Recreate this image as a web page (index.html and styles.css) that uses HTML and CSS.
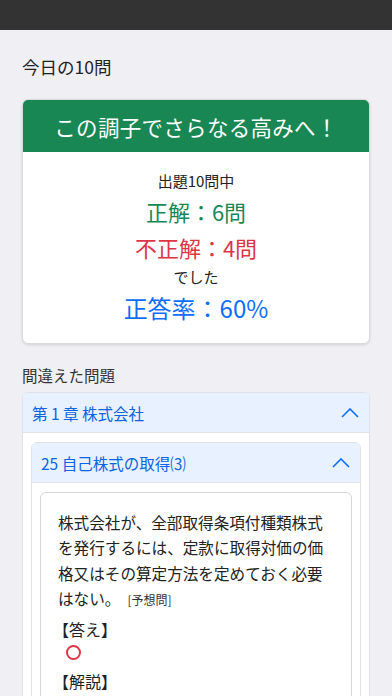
FILE: index.html
```html
<!DOCTYPE html>
<html lang="ja">
<head>
<meta charset="utf-8">
<meta name="viewport" content="width=device-width, initial-scale=1">
<title>今日の10問</title>
<link rel="stylesheet" href="styles.css">
</head>
<body>
<div class="topbar"></div>
<main class="main">
  <h1 class="page-title">今日の10問</h1>
  <section class="result-card">
    <div class="result-head">この調子でさらなる高みへ！</div>
    <div class="result-body">
      <div class="r-small r-first">出題10問中</div>
      <div class="r-correct">正解：6問</div>
      <div class="r-wrong">不正解：4問</div>
      <div class="r-small r-deshita">でした</div>
      <div class="r-rate">正答率：60%</div>
    </div>
  </section>

  <h2 class="section-title">間違えた問題</h2>
  <div class="acc">
    <div class="acc-head">
      <span>第 1 章 株式会社</span>
      <svg class="chev" width="18" height="10" viewBox="0 0 18 10"><polyline points="1,9 9,1 17,9" fill="none" stroke="#0d6efd" stroke-width="1.6"/></svg>
    </div>
    <div class="acc-body">
      <div class="acc">
        <div class="acc-head">
          <span>25 自己株式の取得⑶</span>
          <svg class="chev" width="18" height="10" viewBox="0 0 18 10"><polyline points="1,9 9,1 17,9" fill="none" stroke="#0d6efd" stroke-width="1.6"/></svg>
        </div>
        <div class="acc-body">
          <div class="q-card">
            <p class="q-text"><span class="q-body">株式会社が、全部取得条項付種類株式を発行するには、定款に取得対価の価格又はその算定方法を定めておく必要はない。</span><span class="q-tag">[予想問]</span></p>
            <div class="q-label">【答え】</div>
            <div class="q-mark"><span class="circle"></span></div>
            <div class="q-label">【解説】</div>
          </div>
        </div>
      </div>
    </div>
  </div>
</main>
</body>
</html>
```

FILE: styles.css
```css
* { box-sizing: border-box; }
html, body {
  margin: 0;
  padding: 0;
  background: #efeff4;
  font-family: "Noto Sans CJK JP", "Noto Sans", sans-serif;
  color: #222;
}
body { overflow: hidden; height: 696px; }
.topbar {
  height: 30px;
  background: #333333;
}
.main {
  padding: 25px 22px 0 22px;
}
.page-title {
  margin: 0;
  font-size: 17.5px;
  font-weight: 400;
  line-height: 24px;
  color: #222;
}
.result-card {
  margin-top: 20px;
  background: #fff;
  border: 1px solid #d9d9de;
  border-radius: 6px;
  overflow: hidden;
  box-shadow: 0 1px 3px rgba(0,0,0,0.12);
}
.result-head {
  background: #198754;
  color: #fff;
  height: 52px;
  display: flex;
  align-items: center;
  justify-content: center;
  font-size: 21.5px;
  letter-spacing: 0.3px;
}
.result-body {
  text-align: center;
  padding: 19px 0 18px;
}
.r-small { font-size: 15px; line-height: 20px; color: #222; }
.r-correct { font-size: 22px; line-height: 40px; color: #198754; }
.r-wrong { font-size: 22px; line-height: 32px; color: #dc3545; }
.r-deshita { line-height: 28px; }
.r-rate { font-size: 24px; line-height: 34px; color: #0d6efd; }

.section-title {
  margin: 20px 0 6px;
  font-size: 15.5px;
  font-weight: 400;
  line-height: 22px;
  color: #333;
}
.acc {
  background: #fff;
  border: 1px solid #dfe2e6;
  border-radius: 6px;
  overflow: hidden;
}
.acc-head {
  background: #e7f1ff;
  height: 40px;
  display: flex;
  align-items: center;
  justify-content: space-between;
  padding: 0 10px 0 9px;
  border-bottom: 1px solid #dfe2e6;
  color: #0c63e4;
  font-size: 15.5px;
}
.chev { display: block; }
.acc-body {
  padding: 9px 8px 0 8px;
}
.q-card {
  background: #fff;
  border: 1px solid #d6d6da;
  border-radius: 6px;
  padding: 17px 18px 20px 17px;
}
.q-text {
  margin: 0;
  font-size: 15.6px;
  line-height: 25.3px;
  color: #222;
}
.q-tag {
  display: inline-block;
  font-size: 12px;
  line-height: 14px;
  margin-left: 7px;
  color: #333;
}
.q-label {
  font-size: 16px;
  line-height: 24px;
  margin-left: -5px;
  margin-top: 6px;
  color: #222;
}
.q-mark {
  height: 23px;
  display: flex;
  align-items: center;
  padding-left: 8px;
}
.circle {
  width: 15px;
  height: 15px;
  border: 2px solid #dc3545;
  border-radius: 50%;
  display: block;
}
.q-mark + .q-label { margin-top: 5px; }
```
